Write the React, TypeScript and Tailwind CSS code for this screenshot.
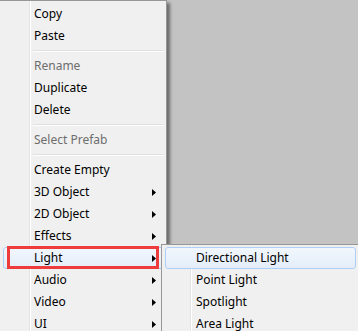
import type { ReactNode } from 'react'

type Item =
  | { kind: 'item'; label: string; disabled?: boolean; sub?: boolean; active?: boolean }
  | { kind: 'sep' }

const mainItems: Item[] = [
  { kind: 'item', label: 'Copy' },
  { kind: 'item', label: 'Paste' },
  { kind: 'sep' },
  { kind: 'item', label: 'Rename', disabled: true },
  { kind: 'item', label: 'Duplicate' },
  { kind: 'item', label: 'Delete' },
  { kind: 'sep' },
  { kind: 'item', label: 'Select Prefab', disabled: true },
  { kind: 'sep' },
  { kind: 'item', label: 'Create Empty' },
  { kind: 'item', label: '3D Object', sub: true },
  { kind: 'item', label: '2D Object', sub: true },
  { kind: 'item', label: 'Effects', sub: true },
  { kind: 'item', label: 'Light', sub: true, active: true },
  { kind: 'item', label: 'Audio', sub: true },
  { kind: 'item', label: 'Video', sub: true },
  { kind: 'item', label: 'UI', sub: true },
]

const lightItems: Item[] = [
  { kind: 'item', label: 'Directional Light', active: true },
  { kind: 'item', label: 'Point Light' },
  { kind: 'item', label: 'Spotlight' },
  { kind: 'item', label: 'Area Light' },
]

function Arrow() {
  return (
    <svg width="4" height="7" viewBox="0 0 4 7" className="shrink-0">
      <polygon points="0,0 4,3.5 0,7" fill="#000" />
    </svg>
  )
}

function Row({ item, gutter }: { item: Item; gutter: string }): ReactNode {
  if (item.kind === 'sep') {
    return (
      <div className="h-2 flex items-center">
        <div className={`${gutter} shrink-0`} />
        <div className="flex-1 mr-[1px]">
          <div className="h-px bg-[#e0e0e0]" />
          <div className="h-px bg-white" />
        </div>
      </div>
    )
  }
  return (
    <div
      className={`h-[22px] flex items-center rounded-[3px] border ${item.active
          ? 'border-[#aecff7] bg-gradient-to-b from-[#f2f7fd] to-[#e3edf9]'
          : 'border-transparent'
        }`}
    >
      <div className={`${gutter} shrink-0`} />
      <span className={`flex-1 ${item.disabled ? 'text-[#6d6d6d]' : 'text-black'}`}>
        {item.label}
      </span>
      {item.sub && (
        <span className="pr-[7px] flex items-center">
          <Arrow />
        </span>
      )}
    </div>
  )
}

export default function App() {
  return (
    <div
      className="relative w-[358px] h-[331px] bg-[#c3c3c3] overflow-hidden text-[12px] leading-none"
      style={{ fontFamily: '"Noto Sans", "Open Sans", sans-serif' }}
    >
      {/* Main context menu */}
      <div className="absolute left-[-1px] top-0 w-[168px] h-[340px] bg-[#f0f0f0] border border-[#979797] shadow-[3px_3px_3px_rgba(0,0,0,0.45)] pt-[2px] pl-[3px] pr-[2px]">
        {/* gutter line */}
        <div className="absolute left-[29px] top-0 bottom-0 w-px bg-[#e2e3e3]" />
        <div className="absolute left-[30px] top-0 bottom-0 w-px bg-white" />
        <div className="relative flex flex-col">
          {mainItems.map((it, i) => (
            <Row key={i} item={it} gutter="w-[30px]" />
          ))}
        </div>
      </div>

      {/* Light submenu */}
      <div className="absolute left-[161px] top-[244px] w-[200px] h-[100px] bg-[#f0f0f0] border border-[#979797] pt-[2px] pl-[3px] pr-[4px]">
        <div className="absolute left-[28px] top-0 bottom-0 w-px bg-[#e2e3e3]" />
        <div className="absolute left-[29px] top-0 bottom-0 w-px bg-white" />
        <div className="relative flex flex-col">
          {lightItems.map((it, i) => (
            <Row key={i} item={it} gutter="w-[30px]" />
          ))}
        </div>
      </div>

      {/* annotation box */}
      <div className="absolute left-[7px] top-[246px] w-[152px] h-[23px] border-[3px] border-[#ee3b3b]" />
    </div>
  )
}
